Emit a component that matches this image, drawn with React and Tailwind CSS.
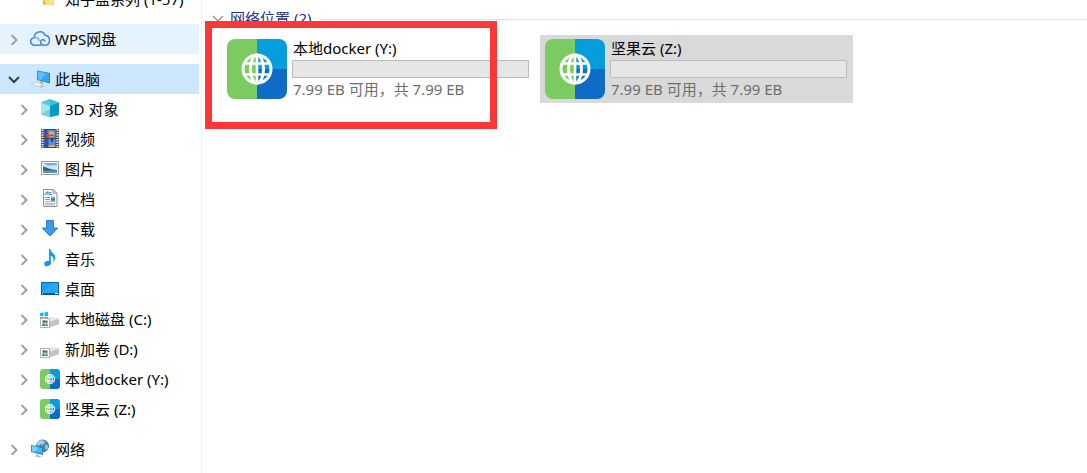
import { useState } from "react";

function FolderIcon() {
  return (
    <svg viewBox="0 0 20 20" className="w-5 h-5 shrink-0">
      <path d="M3 2h6l2 2h3v12H3z" fill="#f5cf68" />
      <path d="M6 5h8v8l-4 3H5z" fill="#ffe08a" />
      <path d="M3 9l3 5-1 2H3z" fill="#eebb45" />
    </svg>
  );
}

function CloudIcon() {
  return (
    <svg viewBox="0 0 20 20" className="w-5 h-5 shrink-0" fill="none" stroke="#4285f4" strokeWidth="1.6" strokeLinecap="round">
      <path d="M10.500 16.200H4.600A3.800 3.800 0 0 1 4.400 8.600 5.500 5.500 0 0 1 15 6.300a5 5 0 0 1 .4 9.900c-3.600.4-4.900-1.700-4.900-3.400a2.300 2.300 0 0 1 4.300-1" />
      <path d="M4.400 8.600c2.500-.5 4.100.8 4.700 2.600" stroke="#7eb0fa" />
    </svg>
  );
}

function ComputerIcon() {
  return (
    <svg viewBox="0 0 20 20" className="w-5 h-5 shrink-0">
      <path d="M7 1.500l13 2.500v10.500L7 11z" fill="#4b7f9f" />
      <path d="M7.800 2.600L19 4.800v8.400L7.800 10.200z" fill="#2fa8fa" />
      <path d="M7.800 2.600L16 4.200l-5 6.800-3.200-.8z" fill="#5abfff" />
      <path d="M10 12l3 1v2.500l-3-1z" fill="#a3acb3" />
      <path d="M.500 15l6-2 7 2-5 2.500z" fill="#dde1e4" stroke="#b9c0c6" strokeWidth=".5" />
      <path d="M3 15l7 1.500M5 14l6 1.500" stroke="#fff" strokeWidth=".6" />
      <path d="M9.500 17.500l4-1 1 1-3.500 1.300z" fill="#b3babf" />
    </svg>
  );
}

function CubeIcon() {
  return (
    <svg viewBox="0 0 20 20" className="w-5 h-5 shrink-0">
      <path d="M10 0l9 3.500v13L10 18l-9-2.500v-12z" fill="#3cc3d3" />
      <path d="M1 3.500L10 7v11l-9-2.500z" fill="#a1e7ec" />
      <path d="M19 3.500L10 7v11l9-2.500z" fill="#0899c4" />
      <path d="M10 0L1 3.500 10 7z" fill="#55cbd7" />
      <path d="M1 15.500L10 10v8z" fill="#6bd4e0" />
    </svg>
  );
}

function VideoIcon() {
  return (
    <svg viewBox="0 0 20 20" className="w-5 h-5 shrink-0">
      <path d="M1 0h18v19H1z" fill="#4a4a4a" />
      <path d="M2.500 .500v18M17.500 .500v18" stroke="#f2f2f2" strokeWidth="2" strokeDasharray="1.400 1" />
      <path d="M4.500 1h11v8h-11zM4.500 10h11v8h-11z" fill="#4c91ec" />
      <path d="M4.500 1h3v8h-3zM4.500 10h4v8h-4z" fill="#2354bd" />
      <circle cx="11.500" cy="5" r="2.800" fill="#edb52c" />
      <circle cx="7.500" cy="6.500" r="1.700" fill="#dc3c2d" />
      <path d="M9.500 5.500h4v1.500h-4z" fill="#d4392c" />
      <path d="M10.500 10h3l-1 3h-1z" fill="#253e5c" />
      <path d="M8 18l1-1.500h2l1-1 3 1.500v1z" fill="#ecb62d" />
    </svg>
  );
}

function PictureIcon() {
  return (
    <svg viewBox="0 0 20 20" className="w-5 h-5 shrink-0">
      <path d="M1.500 2.500h17v13h-17z" fill="#fff" stroke="#9a9a9a" />
      <path d="M3 4h14v10H3z" fill="#c9e6fc" />
      <path d="M3 4h14v2L8 6.500z" fill="#6bb1f2" />
      <path d="M3 7.500c3 0 5 3 14 3.500v1H3z" fill="#3a6d65" />
      <path d="M3 11.500h14V14H3z" fill="#4788b8" />
      <path d="M3 13h14" stroke="#7ab2d9" strokeWidth=".7" />
    </svg>
  );
}

function DocumentIcon() {
  return (
    <svg viewBox="0 0 20 20" className="w-5 h-5 shrink-0">
      <path d="M3.500 .500h10l3.500 3.500v13.500H3.500z" fill="#fff" stroke="#919191" />
      <path d="M13 .500V4h4" fill="#e8e8e8" stroke="#919191" />
      <path d="M5 6l2-3h1v3M9 3.500h2M9 5.500h3" fill="none" stroke="#2692df" strokeWidth="1.200" />
      <path d="M5 8.500h5M5 10.500h5" stroke="#4aa5de" />
      <path d="M5 12.500h10M5 14.500h10M5 16h10M11 8h4" stroke="#aab1b8" />
      <path d="M11 8.500h4v3h-4z" fill="#4797ca" />
      <path d="M11 10.500h4v1h-4z" fill="#30596b" />
    </svg>
  );
}

function DownloadIcon() {
  return (
    <svg viewBox="0 0 20 20" className="w-5 h-5 shrink-0">
      <path d="M6.500 1.500h7V9h4.300L10 17 2.200 9h4.300z" fill="#399bea" stroke="#2a81cb" />
    </svg>
  );
}

function MusicIcon() {
  return (
    <svg viewBox="0 0 20 20" className="w-5 h-5 shrink-0" fill="#099cfa">
      <ellipse cx="7.500" cy="14.500" rx="3.400" ry="2.600" transform="rotate(-20 7.500 14.500)" />
      <path d="M9 0h1.500c0 4 4.800 4.200 4.800 8.500 0 1.800-.8 3.500-2 4.500 1-4-.8-6-2.500-6.500v8.500H9z" />
    </svg>
  );
}

function DesktopIcon() {
  return (
    <svg viewBox="0 0 20 20" className="w-5 h-5 shrink-0">
      <path d="M1.500 3.500h17v12h-17z" fill="#1a9dfc" stroke="#08679f" />
      <path d="M2 13L13 4h5v10H2z" fill="#38adff" opacity=".5" />
      <path d="M1 14h18v2H1z" fill="#075987" />
      <path d="M2 14.500h1M15 14.500h3" stroke="#fff" />
    </svg>
  );
}

function DriveIcon({ system }) {
  return (
    <svg viewBox="0 0 20 20" className="w-5 h-5 shrink-0">
      {system && <path d="M0 4l3.500-.5V7H0zM4.500 3.300L8 3v4H4.500zM0 8h3.500v2.500H0zM4.500 8H8v3H4.500z" fill="#08bdf0" />}
      <path d="M7 10.500l5-2 7 1.500v5l-9 3z" fill="#b0b0b0" />
      <path d="M7 10.500l5-2 7 1.500-9 3z" fill="#e6e6e6" />
      <path d="M10 13l9-3v5l-9 3z" fill="#c4c4c4" />
      <path d="M.500 9.500h9v9h-9z" fill="#fff" stroke="#b0b0b0" />
      <path d="M2 11h6v6H2z" fill="#c6e0d8" />
      <circle cx="3.800" cy="12.500" r="1.200" fill="#69574c" />
      <circle cx="6.300" cy="12.700" r="1.200" fill="#7a5a4c" />
      <path d="M2 17v-1.500l2-1.500 1.500 3z" fill="#3d8bb8" />
      <path d="M5 17l1-2.500 2 1V17z" fill="#53a575" />
    </svg>
  );
}

function NetworkIcon() {
  return (
    <svg viewBox="0 0 20 20" className="w-5 h-5 shrink-0">
      <circle cx="12.500" cy="7" r="6.500" fill="#4b86a8" />
      <path d="M7 4c2-4 7-3 8-1l-2 3-3-1-1 2-2-1z" fill="#a5d3e3" />
      <path d="M15 5.500l3 1v3l-3 1z" fill="#8fc4d6" />
      <path d="M1 6l12 2.500v7.500L1 13z" fill="#217dbb" />
      <path d="M1.800 7L12.200 9.200v5.600L1.800 12.300z" fill="#48b5fa" />
      <path d="M1.800 7l7 1.500-4 4.500-3-.7z" fill="#7ccfff" />
      <path d="M6 15l3 .7v1l3 .8-3 1-4-1 1-.5z" fill="#b5bcc1" />
    </svg>
  );
}

function WebDriveIcon({ large }) {
  return (
    <svg viewBox="0 0 60 60" className={large ? "w-[60px] h-[60px] shrink-0 rounded-lg" : "w-5 h-5 shrink-0 rounded-[3px]"}>
      <path d="M0 0h30v60H0z" fill="#7ccb62" />
      <path d="M30 0h30v30H30z" fill="#039edb" />
      <path d="M30 30h30v30H30z" fill="#0e6cc6" />
      <g fill="none" stroke="#fff" strokeWidth="3">
        <circle cx="30" cy="30" r="14" />
        <ellipse cx="30" cy="30" rx="6.500" ry="14" />
        <path d="M30 16v28M17.500 24.500h25M17.500 35.500h25" strokeWidth="2.600" />
      </g>
    </svg>
  );
}

function Chevron({ open, thin }) {
  let color = "stroke-[#a0a0a0]";
  if (open) color = "stroke-[#303b48]";
  if (thin) color = "stroke-[#8a8a8a]";
  return (
    <svg viewBox="0 0 12 12" className={`w-3 h-3 shrink-0 ${color}`} fill="none" strokeWidth={thin ? 1.2 : 2}>
      {open || thin ? <path d="M1 4l5 5 5-5" /> : <path d="M3.500 2l5 5-5 5" />}
    </svg>
  );
}

const children = [
  { name: "3D 对象", icon: <CubeIcon /> },
  { name: "视频", icon: <VideoIcon /> },
  { name: "图片", icon: <PictureIcon /> },
  { name: "文档", icon: <DocumentIcon /> },
  { name: "下载", icon: <DownloadIcon /> },
  { name: "音乐", icon: <MusicIcon /> },
  { name: "桌面", icon: <DesktopIcon /> },
  { name: "本地磁盘 (C:)", icon: <DriveIcon system /> },
  { name: "新加卷 (D:)", icon: <DriveIcon /> },
  { name: "本地docker (Y:)", icon: <WebDriveIcon /> },
  { name: "坚果云 (Z:)", icon: <WebDriveIcon /> },
];

const drives = [
  { name: "本地docker (Y:)", space: "7.99 EB 可用，共 7.99 EB" },
  { name: "坚果云 (Z:)", space: "7.99 EB 可用，共 7.99 EB" },
];

function TreeItem({ name, icon, nested, open, onClick, className = "" }) {
  return (
    <button
      type="button"
      onClick={onClick}
      className={`flex items-center w-full h-[30px] text-left whitespace-nowrap ${nested ? "pl-[18px]" : "pl-2"} ${className}`}
    >
      <Chevron open={open} />
      <span className="ml-2.5 mr-[5px]">{icon}</span>
      <span>{name}</span>
    </button>
  );
}

function DriveTile({ drive, selected, onClick }) {
  return (
    <button
      type="button"
      onClick={onClick}
      className={`flex gap-[5px] w-[313px] px-[5px] py-1 text-left ${selected ? "bg-[#d9d9d9]" : ""}`}
    >
      <WebDriveIcon large />
      <span className="flex flex-col gap-px w-[237px] leading-5">
        <span className="h-5 pl-px leading-[18px]">{drive.name}</span>
        <span className="h-[18px] border border-[#bcbcbc] bg-[#e6e6e6]" />
        <span className="pl-px text-[#6d6d6d]">{drive.space}</span>
      </span>
    </button>
  );
}

export default function App() {
  const [expanded, setExpanded] = useState(true);
  const [selected, setSelected] = useState(1);

  return (
    <div className="relative flex min-h-screen overflow-hidden bg-white text-black text-[15px] font-['Noto_Sans','Noto_Sans_CJK_SC',sans-serif]">
      <nav className="flex flex-col w-[202px] shrink-0 -mt-4 pr-0.5 border-r border-[#f0f0f0]">
        <button type="button" className="flex items-center h-[30px] pl-10 gap-[5px] text-left whitespace-nowrap">
          <FolderIcon />
          <span>知乎盐系列 (1-57)</span>
        </button>
        <TreeItem name="WPS网盘" icon={<CloudIcon />} className="mt-2.5 bg-[#e5f3ff]" />
        <TreeItem
          name="此电脑"
          icon={<ComputerIcon />}
          open={expanded}
          onClick={() => setExpanded(!expanded)}
          className="mt-2.5 bg-[#cce8ff]"
        />
        {expanded && children.map((item) => <TreeItem key={item.name} name={item.name} icon={item.icon} nested />)}
        <TreeItem name="网络" icon={<NetworkIcon />} className="mt-2.5" />
      </nav>

      <main className="flex-1 min-w-0 pt-2">
        <h2 className="flex items-center pl-2.5 leading-5 text-[#1e3287]">
          <Chevron thin />
          <span className="ml-1.5 whitespace-nowrap">网络位置 (2)</span>
          <span className="flex-1 h-[3px] ml-2 border-b border-[#e2e2e2]" />
        </h2>
        <div className="flex flex-wrap gap-[5px] mt-[7px] pl-5">
          {drives.map((drive, i) => (
            <DriveTile key={drive.name} drive={drive} selected={selected === i} onClick={() => setSelected(i)} />
          ))}
        </div>
      </main>

      {/* highlight around the first drive */}
      <div className="absolute left-[205px] top-[21px] w-[292px] h-[108px] border-7 border-[#fc3737] pointer-events-none" />
    </div>
  );
}
